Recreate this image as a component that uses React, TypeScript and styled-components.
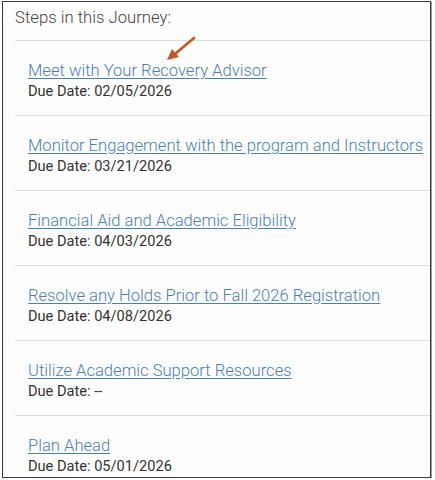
import styled, { createGlobalStyle } from "styled-components";

const GlobalStyle = createGlobalStyle`
  html, body {
    margin: 0;
    padding: 0;
    background: #fff;
  }
  body {
    font-family: Roboto, "Liberation Sans", sans-serif;
    -webkit-font-smoothing: antialiased;
  }
`;

const STEPS = [
  { title: "Meet with Your Recovery Advisor", due: "02/05/2026" },
  { title: "Monitor Engagement with the program and Instructors", due: "03/21/2026" },
  { title: "Financial Aid and Academic Eligibility", due: "04/03/2026" },
  { title: "Resolve any Holds Prior to Fall 2026 Registration", due: "04/08/2026" },
  { title: "Utilize Academic Support Resources", due: "--" },
  { title: "Plan Ahead", due: "05/01/2026" },
];

const Frame = styled.div`
  position: relative;
  box-sizing: border-box;
  width: 429px;
  height: 477px;
  margin: 1px 0 0 2px;
  border: 1px solid #3a3a3a;
  box-shadow: 1px 1px 0 #9a9a9a;
  background: #fdfdfd;
  overflow: hidden;
`;

const Heading = styled.div`
  padding: 6px 0 12px 12px;
  font-size: 16.7px;
  line-height: 20px;
  font-weight: 300;
  color: #444;
`;

const StepList = styled.ul`
  list-style: none;
  margin: 0 0 0 12px;
  padding: 0;
`;

const Step = styled.li`
  border-top: 1px solid #dcdcdc;
  padding: 20px 0 14px 13px;
`;

const StepLink = styled.a`
  display: block;
  font-size: 16.6px;
  line-height: 20px;
  font-weight: 300;
  color: #4b7fb6;
  text-decoration: underline;
  text-underline-offset: 2px;
  white-space: nowrap;
  cursor: pointer;
`;

const DueDate = styled.div`
  font-size: 14.6px;
  line-height: 20px;
  color: #333;
`;

const Arrow = styled.svg`
  position: absolute;
  left: 160px;
  top: 32px;
  width: 40px;
  height: 32px;
  pointer-events: none;
`;

export default function App() {
  return (
    <>
      <GlobalStyle />
      <Frame>
        <Heading>Steps in this Journey:</Heading>
        <StepList>
          {STEPS.map((s) => (
            <Step key={s.title}>
              <StepLink>{s.title}</StepLink>
              <DueDate>Due Date: {s.due}</DueDate>
            </Step>
          ))}
        </StepList>
        <Arrow viewBox="0 0 40 32">
          <line x1="31" y1="4" x2="12" y2="20" stroke="#c9561c" strokeWidth="2.6" strokeLinecap="round" />
          <polygon points="4,26 9,15 16,23" fill="#c9561c" />
        </Arrow>
      </Frame>
    </>
  );
}
